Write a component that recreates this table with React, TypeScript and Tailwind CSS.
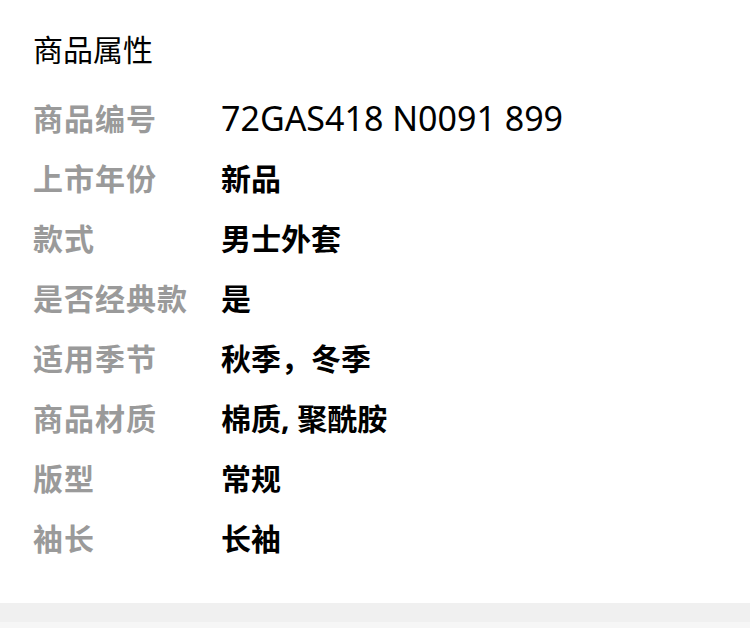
import React from 'react';

const rows: { label: string; value: string; latin?: boolean }[] = [
  { label: '商品编号', value: '72GAS418 N0091 899', latin: true },
  { label: '上市年份', value: '新品' },
  { label: '款式', value: '男士外套' },
  { label: '是否经典款', value: '是' },
  { label: '适用季节', value: '秋季，冬季' },
  { label: '商品材质', value: '棉质, 聚酰胺' },
  { label: '版型', value: '常规' },
  { label: '袖长', value: '长袖' },
];

export default function App() {
  return (
    <div
      className="w-[750px] h-[628px] bg-white flex flex-col"
      style={{ fontFamily: '"Noto Sans", "Noto Sans CJK SC", sans-serif' }}
    >
      <div className="pl-[33px] pt-[30px] flex-1">
        {/* Title */}
        <h2 className="text-[30px] leading-[40px] text-black font-normal">商品属性</h2>

        {/* Attribute rows */}
        <div className="mt-[18px] flex flex-col">
          {rows.map((row) => (
            <div key={row.label} className="flex items-center h-[60px]">
              <span className="w-[188px] text-[30px] font-bold text-[#9a9a9a] tracking-[1px]">
                {row.label}
              </span>
              <span
                className={
                  row.latin
                    ? 'text-[34px] font-normal text-black'
                    : 'text-[30px] font-bold text-black'
                }
              >
                {row.value}
              </span>
            </div>
          ))}
        </div>
      </div>

      {/* Bottom divider band */}
      <div className="h-[19px] bg-[#f0f0f0]" />
      <div className="h-[6px] bg-[#f6f6f6]" />
    </div>
  );
}
